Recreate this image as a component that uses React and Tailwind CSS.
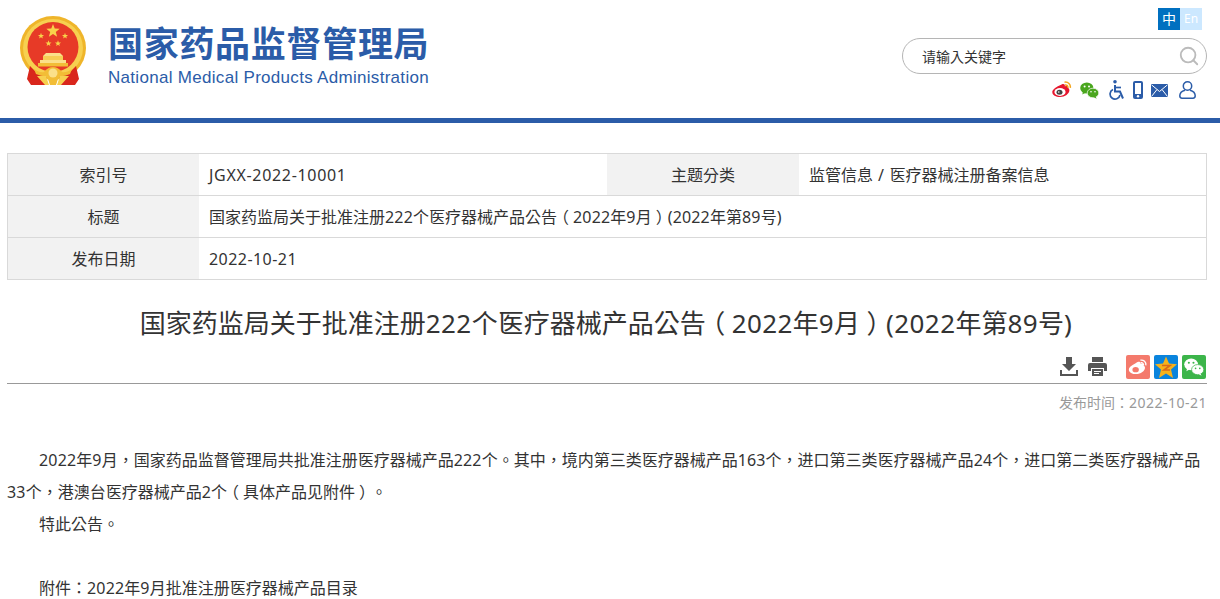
import { Search } from 'lucide-react';

const font = "font-['Noto_Sans','Noto_Sans_CJK_TC',sans-serif]";

// full-width brackets sit in the middle of their cell in the reference font:
// halt makes them half width, padding brings the cell back to 1em
const Cjk = ({ text }) =>
  text.split(/([（）])/).map((part, i) =>
    i % 2 ? <span key={i} className="[font-feature-settings:'halt'] px-[0.25em]">{part}</span> : part
  );

// latin runs are a bit wider in the reference font, so space them out
const T = ({ children, wide = 'tracking-[0.17px]' }) =>
  children.split(/([\x20-\x7e]+)/).map((part, i) =>
    i % 2 ? <span key={i} className={wide}>{part}</span> : <Cjk key={i} text={part} />
  );

const Star = ({ x, y, r }) => {
  const pts = [];
  for (let i = 0; i < 10; i++) {
    const a = -Math.PI / 2 + (i * Math.PI) / 5;
    const d = i % 2 ? r * 0.42 : r;
    pts.push(`${x + d * Math.cos(a)},${y + d * Math.sin(a)}`);
  }
  return <polygon points={pts.join(' ')} fill="#f8d24a" />;
};

const Emblem = () => (
  <svg width="66" height="70" viewBox="0 0 66 70" className="shrink-0">
    <ellipse cx="33" cy="32" rx="33" ry="32" fill="#efb52a" />
    <ellipse cx="33" cy="32" rx="30" ry="29" fill="#f7d050" />
    <ellipse cx="33" cy="31" rx="25.500" ry="25" fill="#e73a27" />
    <path d="M10 50 L7 63 L11 69 L25 69 L27 62 L15 55 Z" fill="#d9261c" />
    <path d="M56 50 L59 63 L55 69 L41 69 L39 62 L51 55 Z" fill="#d9261c" />
    <path d="M26 37 h14 l3 3 h-20 z" fill="#fbe08a" />
    <rect x="23" y="40" width="20" height="4" fill="#f7cf55" />
    <rect x="20" y="44" width="26" height="3" fill="#fbe08a" />
    <rect x="18" y="47" width="30" height="3.500" fill="#f2bd36" />
    <path d="M14 53 q6 4 10 3 q4 -5 9 -5 q5 0 9 5 q4 1 10 -3 l-2 5 q-7 3 -12 2 l2 3 h-14 l2 -3 q-5 1 -12 -2 z" fill="#f2bd36" />
    <path d="M17 60 h9 l3 9 h-4 z M49 60 h-9 l-3 9 h4 z" fill="#f7d050" />
    <circle cx="33" cy="57" r="4.500" fill="#fbe08a" />
    <path d="M28 63 h10 l-2 6 h-6 z" fill="#f2bd36" />
    <Star x={33} y={15} r={7} />
    <Star x={21} y={20} r={3.200} />
    <Star x={45} y={20} r={3.200} />
    <Star x={28.500} y={27.500} r={3.200} />
    <Star x={38} y={27.500} r={3.200} />
  </svg>
);

const WeiboIcon = () => (
  <svg width="20" height="18" viewBox="0 0 20 18">
    <path d="M7.500 4.500c2.800-2 4.800-2 5.300-.6.200.7 0 1.500 0 1.500 1.800-.8 3.600-.5 3.200 1.700.8.400 1.400 1.100 1.400 2.200 0 3.400-4.500 6.700-9.400 6.700C4 16 .3 14.300.3 11c0-1.800 2.300-4.200 7.200-6.500z" fill="#e6162d" />
    <ellipse cx="8" cy="11" rx="5.600" ry="3.900" fill="#fff" />
    <ellipse cx="7.500" cy="11.300" rx="3" ry="2.500" fill="#444" />
    <circle cx="6.800" cy="11" r=".8" fill="#fff" />
    <path d="M12.500 1.200c3.600-.6 6.300 2 5.800 5.600M13 4c1.900-.3 3.100 1 2.900 2.800" stroke="#f2a61f" strokeWidth="1.500" fill="none" />
  </svg>
);

const WechatIcon = ({ bubble = '#4aa61e', eye = '#fff', w = 19, h = 17 }) => (
  <svg width={w} height={h} viewBox="0 0 19 17">
    <ellipse cx="6.800" cy="6" rx="6.600" ry="5.600" fill={bubble} />
    <path d="M3 9.500l-.7 3 3.200-1.800z" fill={bubble} />
    <ellipse cx="13" cy="11" rx="5.800" ry="4.800" fill={bubble} stroke={eye} strokeWidth=".7" />
    <path d="M15.500 14.500l1.200 2.300-3.400-1.800z" fill={bubble} />
    <circle cx="4.600" cy="4.400" r="1" fill={eye} />
    <circle cx="9" cy="4.400" r="1" fill={eye} />
    <circle cx="11" cy="9.800" r=".8" fill={eye} />
    <circle cx="15" cy="9.800" r=".8" fill={eye} />
  </svg>
);

const AccessIcon = () => (
  <svg width="17" height="20" viewBox="0 0 17 20" fill="none" stroke="#2b5ca8" strokeWidth="1.700">
    <circle cx="7" cy="1.800" r="1.800" fill="#2b5ca8" stroke="none" />
    <path d="M7 5v6.500h5l3 7" strokeWidth="2" />
    <path d="M7 7.500h6" />
    <path d="M5 9.500a5 5 0 1 0 7 5.500" />
  </svg>
);

const PhoneIcon = () => (
  <svg width="10" height="18" viewBox="0 0 10 18">
    <rect width="10" height="18" rx="2" fill="#2b5ca8" />
    <rect x="2" y="2" width="6" height="11" fill="#fff" />
    <circle cx="5" cy="15.300" r="1.200" fill="#fff" />
  </svg>
);

const MailIcon = () => (
  <svg width="17" height="13" viewBox="0 0 17 13">
    <rect width="17" height="13" fill="#2b5ca8" />
    <path d="M.5 .8L8.500 7.500l8-6.700M.5 12.500L6 5.500M16.500 12.500L11 5.500" stroke="#fff" strokeWidth="1" fill="none" />
  </svg>
);

const UserIcon = () => (
  <svg width="17" height="18" viewBox="0 0 17 18" fill="none" stroke="#2b5ca8" strokeWidth="1.500">
    <circle cx="8.500" cy="5" r="4.200" />
    <path d="M6 9.200C3 10 .8 12 .8 14.800c0 1.500.9 2.400 2.200 2.400h11c1.300 0 2.200-.9 2.200-2.400C16.200 12 14 10 11 9.200" />
  </svg>
);

const DownloadIcon = () => (
  <svg width="18" height="19" viewBox="0 0 18 19" fill="#555">
    <path d="M6 0h6v7h4l-7 7-7-7h4z" />
    <path d="M0 13h2v4h14v-4h2v6H0z" />
  </svg>
);

const PrintIcon = () => (
  <svg width="19" height="19" viewBox="0 0 19 19" fill="#555">
    <path d="M4 0h11v5H4z" />
    <path d="M2 6h15a2 2 0 0 1 2 2v6h-3v-3H3v3H0V8a2 2 0 0 1 2-2z" />
    <path fillRule="evenodd" d="M4 12h11v7H4zM6 14v1h7v-1zM6 16v1h5v-1z" />
  </svg>
);

const QzoneIcon = () => (
  <svg width="24" height="24" viewBox="0 0 24 24">
    <rect width="24" height="24" rx="2" fill="#0a84dd" />
    <polygon points="12,1.500 15,8.500 23,9.300 17,14.500 19,23 12,18.500 5,23 7,14.500 1,9.300 9,8.500" fill="#f6b21b" />
    <path d="M8 10.500h8l-6 4.500h6" stroke="#d9691a" strokeWidth="1.600" fill="none" />
  </svg>
);

const Share = ({ color, children }) => (
  <div className={`w-6 h-6 rounded-[2px] flex items-center justify-center ${color}`}>{children}</div>
);

const rowLabel = 'shrink-0 bg-[#f2f2f2] flex items-center justify-center';
const rowValue = 'px-[10px] flex items-center whitespace-pre';

const App = () => {
  return (
    <div className={`bg-white w-[1220px] h-[599px] overflow-hidden text-[#333] ${font}`}>
      {/* header */}
      <div className="h-[123px] border-b-[5px] border-[#2b5ca8] flex justify-between">
        <div className="flex pl-[20px] pt-[16px]">
          <Emblem />
          <div className="ml-[22px] text-[#2b5ca8]">
            <div className="text-[35px] leading-[40px] mt-[8px] font-bold tracking-[0.700px] whitespace-nowrap">国家药品监督管理局</div>
            <div className="text-[17px] leading-[20px] mt-[4px] whitespace-nowrap font-['Liberation_Sans',sans-serif] tracking-[0.300px]">National Medical Products Administration</div>
          </div>
        </div>
        <div className="w-[318px] mr-[13px] pt-[8px] flex flex-col items-end">
          <div className="flex mr-[5px] text-[14px] leading-[22px] text-center">
            <span className="w-[22px] h-[22px] bg-[#0070c0] text-white">中</span>
            <span className="w-[22px] h-[22px] bg-[#cce8ff] text-white text-[12px]">En</span>
          </div>
          <div className="w-[305px] h-[36px] mt-[8px] border border-[#b5b5b5] rounded-[18px] flex items-center justify-between pl-[19px] pr-[6px] text-[14px]">
            <span>请输入关键字</span>
            <Search size={22} color="#bbb" />
          </div>
          <div className="flex items-center h-[20px] mt-[6px] mr-[11px]">
            <WeiboIcon />
            <div className="ml-[8px]"><WechatIcon /></div>
            <div className="ml-[9px]"><AccessIcon /></div>
            <div className="ml-[8px]"><PhoneIcon /></div>
            <div className="ml-[8px]"><MailIcon /></div>
            <div className="ml-[11px]"><UserIcon /></div>
          </div>
        </div>
      </div>

      {/* info table */}
      <div className="mx-[7px] mt-[30px] w-[1200px] border border-[#d9d9d9] text-[16px]">
        <div className="flex h-[42px] border-b border-[#d9d9d9]">
          <div className={`${rowLabel} w-[191px]`}>索引号</div>
          <div className={`${rowValue} w-[408px]`}><T wide="tracking-[0.68px]">JGXX-2022-10001</T></div>
          <div className={`${rowLabel} w-[192px]`}>主题分类</div>
          <div className={rowValue}><span><T wide="tracking-[0.7px]">监管信息 / 医疗器械注册备案信息</T></span></div>
        </div>
        <div className="flex h-[42px] border-b border-[#d9d9d9]">
          <div className={`${rowLabel} w-[191px]`}>标题</div>
          <div className={rowValue}><span><T>国家药监局关于批准注册222个医疗器械产品公告（2022年9月）(2022年第89号)</T></span></div>
        </div>
        <div className="flex h-[41px]">
          <div className={`${rowLabel} w-[191px]`}>发布日期</div>
          <div className={rowValue}><T wide="tracking-[0.45px]">2022-10-21</T></div>
        </div>
      </div>

      {/* article title */}
      <h1 className="mt-[25px] pr-[8px] text-center text-[26px] leading-[36px] font-normal">
        <T wide="tracking-[0.4px]">国家药监局关于批准注册222个医疗器械产品公告（2022年9月）(2022年第89号)</T>
      </h1>

      {/* tools */}
      <div className="mx-[7px] w-[1200px] mt-[14px] h-[29px] border-b border-[#999] flex justify-end">
        <div className="flex items-start mr-[1px]">
          <div className="mt-[2px]"><DownloadIcon /></div>
          <div className="ml-[10px] mt-[2px]"><PrintIcon /></div>
          <div className="ml-[19px]">
            <Share color="bg-[#f47a6c]">
              <svg width="20" height="17" viewBox="0 0 20 18">
                <path d="M7.500 4.500c2.800-2 4.800-2 5.300-.6.200.7 0 1.500 0 1.500 1.800-.8 3.600-.5 3.200 1.700.8.400 1.400 1.100 1.400 2.200 0 3.400-4.500 6.700-9.400 6.700C4 16 .3 14.300.3 11c0-1.800 2.300-4.200 7.200-6.500z" fill="#fff" />
                <ellipse cx="7.500" cy="11.300" rx="3.400" ry="2.800" fill="#f47a6c" />
                <path d="M12.500 1.200c3.600-.6 6.300 2 5.800 5.600M13 4c1.900-.3 3.100 1 2.900 2.800" stroke="#fff" strokeWidth="1.400" fill="none" />
              </svg>
            </Share>
          </div>
          <div className="ml-[4px]"><QzoneIcon /></div>
          <div className="ml-[4px]"><Share color="bg-[#3cb54a]"><WechatIcon bubble="#fff" eye="#3cb54a" w={20} h={18} /></Share></div>
        </div>
      </div>

      <div className="mx-[7px] w-[1200px] text-right text-[14px] leading-[20px] mt-[9px] text-[#999]">
        <T wide="tracking-[0.5px]">发布时间：2022-10-21</T>
      </div>

      {/* article body */}
      <div className="mx-[7px] w-[1200px] mt-[31px] text-[16px] leading-[32px]">
        <p className="indent-[32px]"><T>2022年9月，国家药品监督管理局共批准注册医疗器械产品222个。其中，境内第三类医疗器械产品163个，进口第三类医疗器械产品24个，进口第二类医疗器械产品33个，港澳台医疗器械产品2个（具体产品见附件）。</T></p>
        <p className="indent-[32px]">特此公告。</p>
        <p className="indent-[32px]">&nbsp;</p>
        <p className="indent-[32px]"><T>附件：2022年9月批准注册医疗器械产品目录</T></p>
      </div>
    </div>
  );
};

export default App;
